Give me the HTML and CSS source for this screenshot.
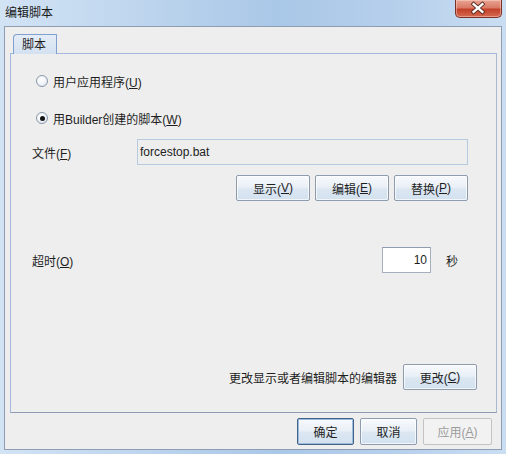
FILE: index.html
```html
<!DOCTYPE html>
<html lang="zh-CN">
<head>
<meta charset="utf-8">
<title>编辑脚本</title>
<link rel="stylesheet" href="styles.css">
</head>
<body>
<div class="window">
  <div class="titlebar">
    <span class="title">编辑脚本</span>
    <div class="close">
      <svg width="47" height="18" viewBox="0 0 47 18">
        <path d="M19 5 L28 13 M28 5 L19 13" stroke="#5a2a22" stroke-width="4.2" stroke-linecap="square"/>
        <path d="M19 5 L28 13 M28 5 L19 13" stroke="#ffffff" stroke-width="2.4" stroke-linecap="square"/>
      </svg>
    </div>
  </div>
  <div class="client">
    <div class="tabstrip"><div class="tab">脚本</div></div>
    <div class="tabbody">
      <div class="radio-row first"><span class="radio"></span><span>用户应用程序(<u>U</u>)</span></div>
      <div class="radio-row second"><span class="radio on"></span><span>用Builder创建的脚本(<u>W</u>)</span></div>
      <div class="file-row">
        <span class="label">文件(<u>F</u>)</span>
        <div class="field readonly">forcestop.bat</div>
      </div>
      <div class="btn-row">
        <button class="btn">显示(<u>V</u>)</button>
        <button class="btn">编辑(<u>E</u>)</button>
        <button class="btn">替换(<u>P</u>)</button>
      </div>
      <div class="timeout-row">
        <span class="label grow">超时(<u>O</u>)</span>
        <div class="field num">10</div>
        <span class="unit">秒</span>
      </div>
      <div class="spacer"></div>
      <div class="change-row">
        <span>更改显示或者编辑脚本的编辑器</span>
        <button class="btn">更改(<u>C</u>)</button>
      </div>
    </div>
    <div class="footer">
      <button class="btn small default">确定</button>
      <button class="btn small">取消</button>
      <button class="btn apply disabled">应用(<u>A</u>)</button>
    </div>
  </div>
</div>
</body>
</html>
```
FILE: styles.css
```css
* { box-sizing: border-box; margin: 0; padding: 0; }
html, body { width: 506px; height: 454px; overflow: hidden; }
body {
  font-family: "Liberation Sans", "Noto Sans CJK SC", sans-serif;
  font-size: 12px;
  color: #1e1e1e;
  background: linear-gradient(90deg, #d2e3f4 0%, #bcd4ed 30%, #a9c7e7 55%, #b7d0ec 80%, #cadef2 100%);
}
.window { display: flex; flex-direction: column; height: 454px; }
.titlebar {
  height: 26px;
  display: flex;
  justify-content: space-between;
  align-items: flex-start;
  padding: 0 4px 0 5px;
}
.title { line-height: 24px; font-size: 12px; color: #1a1a1a; font-family: "Noto Sans CJK SC", sans-serif; }
.close {
  width: 47px;
  height: 18px;
  border: 1px solid #7c2f24;
  border-top: none;
  border-radius: 0 0 5px 5px;
  background: linear-gradient(#e8a493 0%, #d97a66 45%, #c3412a 55%, #d5694f 100%);
  box-shadow: inset 0 0 0 1px rgba(255, 220, 210, 0.45);
  display: flex;
}
.close svg { display: block; margin: -1px 0 0 -1px; }
.client {
  margin: 0 4px;
  height: 424px;
  border: 1px solid #8e9db2;
  background: #eeeeee;
  display: flex;
  flex-direction: column;
  padding: 7px 4px 0 5px;
}
.tabstrip { height: 19px; display: flex; }
.tab {
  margin-left: 3px;
  width: 44px;
  height: 20px;
  border: 1px solid #7f9fcf;
  border-bottom: none;
  border-radius: 4px 1px 0 0;
  background: linear-gradient(#e4ecf7, #d4e1f1);
  padding-left: 8px;
  line-height: 18px;
  font-family: "Noto Sans CJK SC", sans-serif;
  position: relative;
  z-index: 1;
}
.tabbody {
  height: 360px;
  border: 1px solid #a3b8db;
  border-right-color: #a9b8cf;
  border-bottom-color: #8c9bb1;
  display: flex;
  flex-direction: column;
  padding-bottom: 22px;
}
u { text-decoration: underline; text-underline-offset: 1px; }
.radio-row {
  height: 20px;
  display: flex;
  align-items: center;
  gap: 5px;
  padding-left: 25px;
  font-family: "Noto Sans CJK SC", sans-serif;
}
.radio-row span:last-child { font-family: "Liberation Sans", "Noto Sans CJK SC", sans-serif; }
.radio-row.first { margin-top: 17px; }
.radio-row.second { margin-top: 17px; }
.radio {
  width: 12px;
  height: 12px;
  border-radius: 50%;
  border: 1px solid #8a96a8;
  background: radial-gradient(circle at 40% 35%, #ffffff 0%, #f3f6fa 45%, #d4dfec 100%);
  display: flex;
  align-items: center;
  justify-content: center;
}
.radio.on::after {
  content: "";
  width: 5px;
  height: 5px;
  border-radius: 50%;
  background: #141414;
}
.file-row {
  margin-top: 11px;
  height: 26px;
  display: flex;
  align-items: center;
  padding-left: 21px;
}
.label { width: 105px; }
.label.grow { flex: 1; width: auto; }
.field {
  height: 26px;
  display: flex;
  align-items: center;
  border: 1px solid #b7c9df;
}
.field.readonly {
  width: 331px;
  background: #eeeeee;
  padding-left: 2px;
  color: #222;
}
.btn-row {
  margin-top: 10px;
  height: 26px;
  display: flex;
  justify-content: flex-end;
  gap: 5px;
  padding-right: 28px;
}
.btn {
  width: 74px;
  height: 26px;
  border: 1px solid #8d9bad;
  border-radius: 2px;
  background: linear-gradient(#f7f9fc 0%, #eaf0f7 45%, #dbe6f2 55%, #d3e1ef 100%);
  box-shadow: inset 0 0 0 1px rgba(255, 255, 255, 0.7);
  font: inherit;
  color: #1e1e1e;
  display: flex;
  align-items: center;
  justify-content: center;
}
.timeout-row {
  margin-top: 46px;
  height: 26px;
  display: flex;
  align-items: center;
  padding-left: 21px;
  padding-right: 38px;
}
.field.num {
  width: 49px;
  background: #ffffff;
  border-color: #a4b0c0;
  border-top-color: #8f9cae;
  justify-content: flex-end;
  padding-right: 3px;
}
.unit { margin-left: 15px; width: 12px; }
.spacer { flex: 1; }
.change-row {
  height: 26px;
  display: flex;
  align-items: center;
  justify-content: flex-end;
  gap: 6px;
  padding-right: 19px;
}
.footer {
  flex: 1;
  display: flex;
  justify-content: flex-end;
  align-items: flex-start;
  gap: 6px;
  padding: 5px 5px 0 0;
}
.footer .btn { height: 27px; }
.btn.small { width: 57px; }
.btn.apply { width: 69px; }
.btn.default {
  border-color: #3f6389;
  box-shadow: inset 0 0 0 1px #9fbbdc;
}
.btn.disabled {
  border-color: #c3c3c3;
  background: #f2f2f2;
  box-shadow: none;
  color: #9c9c9c;
}
```
